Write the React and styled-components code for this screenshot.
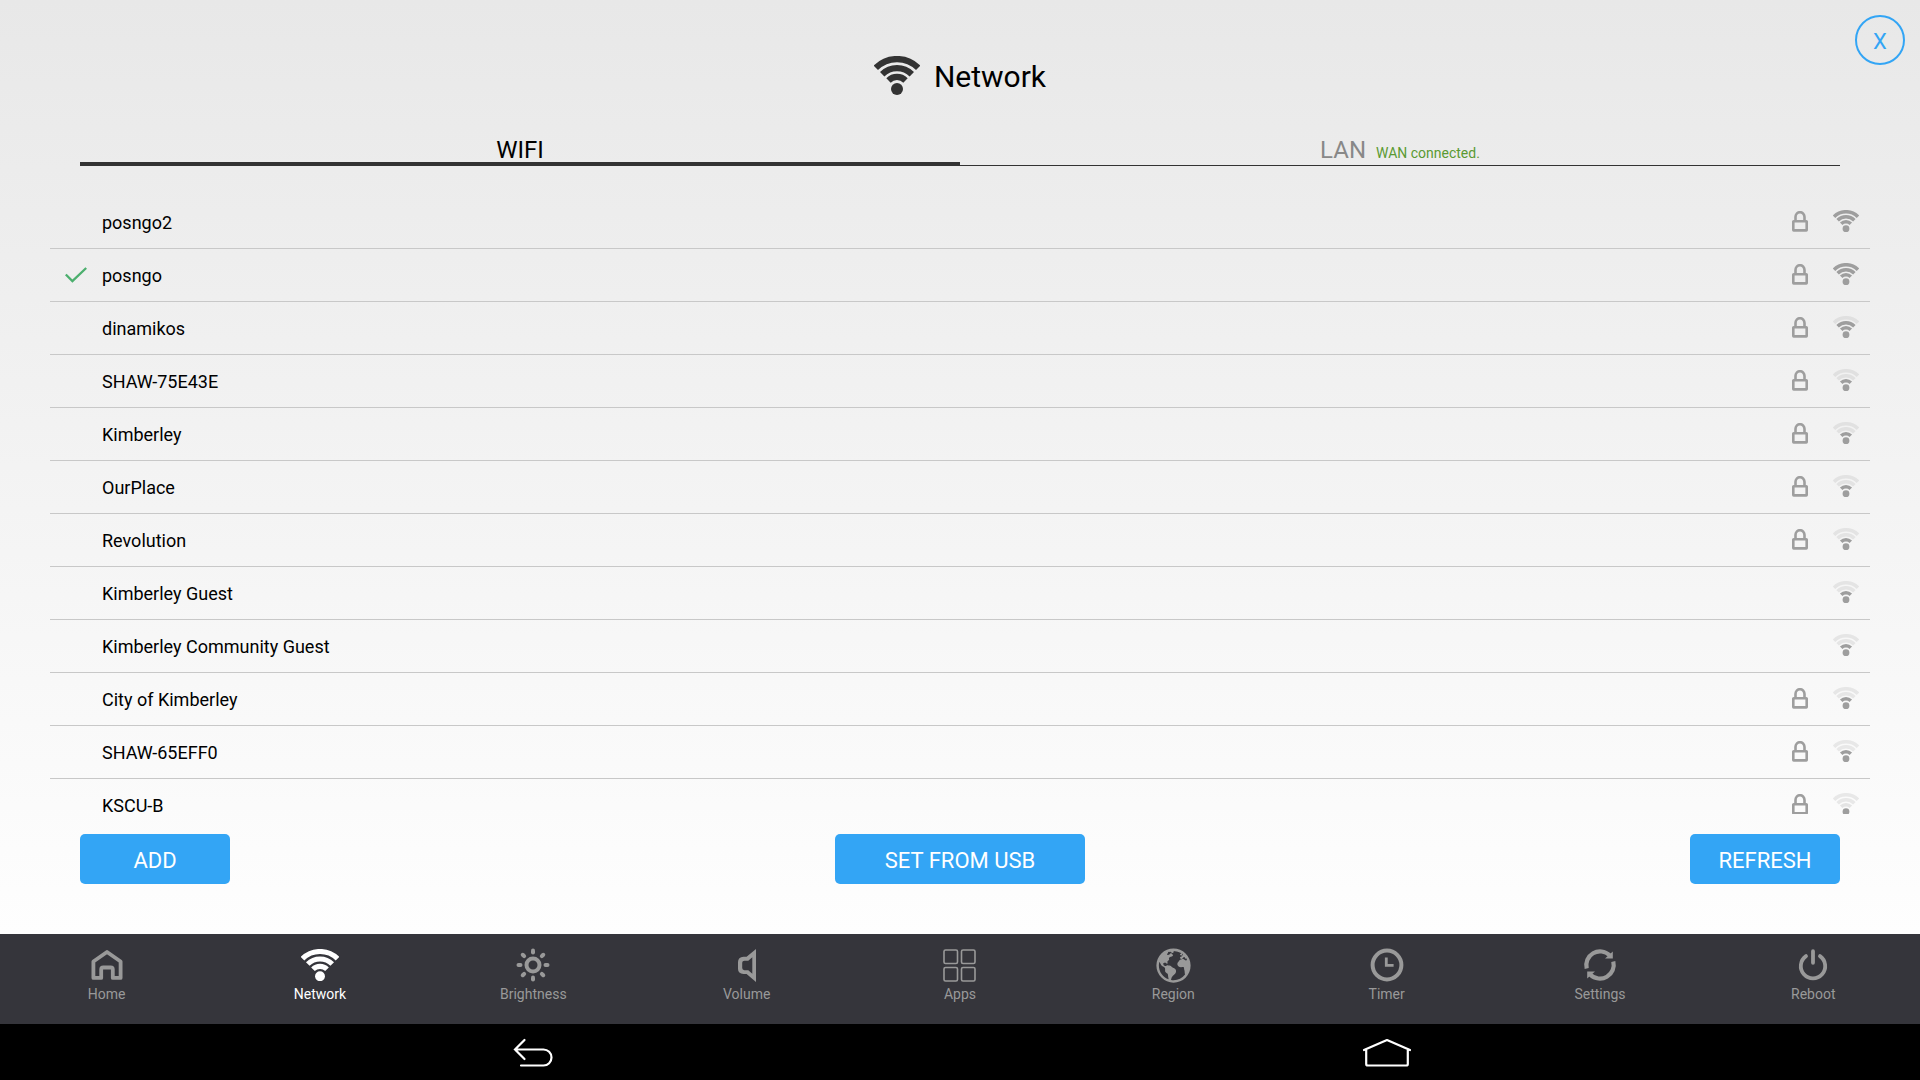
import React, { useState } from "react";
import styled, { createGlobalStyle } from "styled-components";
import { IoEarth } from "react-icons/io5";

const GlobalStyle = createGlobalStyle`
	* {
		box-sizing: border-box;
	}

	body {
		margin: 0;
		font-family: Roboto, "Liberation Sans", sans-serif;
		color: #000;
	}

	button {
		margin: 0;
		padding: 0;
		border: 0;
		background: none;
		font: inherit;
		color: inherit;
		cursor: pointer;
	}
`;

const Screen = styled.div`
	display: flex;
	flex-direction: column;
	height: 100vh;
`;

const Page = styled.main`
	position: relative;
	display: flex;
	flex-direction: column;
	flex: 1;
	min-height: 0;
	background: linear-gradient(#e8e8e8, #fefefe);
`;

const CloseButton = styled.button`
	position: absolute;
	top: 15px;
	right: 15px;
	width: 50px;
	height: 50px;
	padding-top: 2px;
	border: 2px solid #33a5f5;
	border-radius: 50%;
	color: #33a5f5;
	font-size: 22px;
`;

const Header = styled.header`
	display: flex;
	align-items: center;
	justify-content: center;
	gap: 14px;
	padding: 55px 0 39px;
	color: #333;
`;

const Title = styled.h1`
	margin: 0;
	padding-top: 4px;
	color: #000;
	font-size: 30px;
	font-weight: 400;
	line-height: 36px;
`;

const Tabs = styled.div`
	display: flex;
	margin: 0 80px;
`;

const Tab = styled.button`
	display: flex;
	flex: 1;
	align-items: baseline;
	justify-content: center;
	gap: 10px;
	height: 32px;
	box-shadow: inset 0 ${({ $active }) => ($active ? "-4px" : "-1px")} 0 #333;
	color: ${({ $active }) => ($active ? "#000" : "#888")};
	font-size: 24px;
	line-height: 32px;
`;

const TabStatus = styled.span`
	color: #5a9a32;
	font-size: 14px;
	line-height: 16px;
`;

const NetworkList = styled.ul`
	flex: 1;
	min-height: 0;
	margin: 30px 50px 20px;
	padding: 0;
	overflow-y: auto;
	scrollbar-width: none;
	list-style: none;
`;

const NetworkRow = styled.button`
	display: flex;
	align-items: center;
	width: 100%;
	height: 53px;
	padding-right: 11px;
	border-bottom: 1px solid #c8c8c8;
	font-size: 18px;
	text-align: left;
`;

const CheckSlot = styled.span`
	display: flex;
	width: 52px;
	padding-left: 15px;
	color: #4caf6e;
`;

const NetworkName = styled.span`
	flex: 1;
`;

const NetworkIcons = styled.span`
	display: flex;
	align-items: center;
	gap: 25px;
	padding-bottom: 1px;
	color: #9e9e9e;
`;

const Actions = styled.div`
	display: flex;
	justify-content: space-between;
	padding: 0 80px 50px;
`;

const ActionButton = styled.button`
	width: ${({ $wide }) => ($wide ? "250px" : "150px")};
	height: 50px;
	padding-top: 2px;
	border-radius: 5px;
	background: #33a5f5;
	color: #fff;
	font-size: 22px;
`;

const BottomNav = styled.nav`
	display: flex;
	height: 90px;
	background: #35353b;
`;

const NavItem = styled.button`
	display: flex;
	flex: 1;
	flex-direction: column;
	align-items: center;
	padding-top: 14px;
	color: ${({ $active }) => ($active ? "#fff" : "#999")};
	font-size: 14px;
	line-height: 20px;
`;

const NavIcon = styled.span`
	display: flex;
	align-items: center;
	justify-content: center;
	height: 36px;
	padding-bottom: 2px;
`;

const SystemBar = styled.footer`
	display: grid;
	grid-template-columns: 1fr 1fr;
	height: 56px;
	padding: 0 calc(100% / 18);
	background: #000;
	color: #fff;
`;

const SystemButton = styled.button`
	display: flex;
	align-items: center;
	justify-content: center;
	padding-top: 2px;
`;

// level = how many arcs are lit, 0 to 3
const WifiIcon = ({ width = 46, level = 3 }) => (
	<svg width={width} viewBox="0 0 46 39" fill="none" stroke="currentColor" strokeWidth="6.2">
		<path d="M14.5 24.5a12 12 0 0 1 17 0" opacity={level > 0 ? 1 : 0.25} />
		<path d="M8.2 18.2a21 21 0 0 1 29.6 0" opacity={level > 1 ? 1 : 0.2} />
		<path d="M1.8 11.8a30 30 0 0 1 42.4 0" opacity={level > 2 ? 1 : 0.2} />
		<circle cx="23" cy="33" r="6" fill="currentColor" stroke="none" />
	</svg>
);

const LockIcon = () => (
	<svg width="16" height="21" viewBox="0 0 16 21" fill="none" stroke="currentColor" strokeWidth="2.6">
		<path d="M3.5 10V6a4.5 4.8 0 0 1 9 0v4" />
		<rect x="1.3" y="10.2" width="13.4" height="9.2" rx="0.4" />
	</svg>
);

const CheckIcon = () => (
	<svg width="22" height="16" viewBox="0 0 22 16" fill="none" stroke="currentColor" strokeWidth="2.3">
		<path d="M.8 7.5l6.6 6.6L21.2 1" />
	</svg>
);

const HomeIcon = () => (
	<svg width="32" height="32" viewBox="0 0 32 32" fill="none" stroke="currentColor" strokeWidth="3.8" strokeLinejoin="round">
		<path d="M2.4 12.5L16 3l13.6 9.5v16.4h-7.8v-8.4q0-2-2-2h-7.6q-2 0-2 2v8.4H2.4z" />
	</svg>
);

const BrightnessIcon = () => (
	<svg width="34" height="34" viewBox="-17 -17 34 34" fill="none" stroke="currentColor" strokeWidth="4" strokeLinecap="round">
		<circle r="6.5" />
		{[0, 45, 90, 135, 180, 225, 270, 315].map((angle) => (
			<path key={angle} d="M0-12.5v-2" transform={`rotate(${angle})`} />
		))}
	</svg>
);

const VolumeIcon = () => (
	<svg width="18" height="33" viewBox="0 0 18 33" fill="currentColor" fillRule="evenodd">
		<path d="M18 0v33l-9.4-8H5.5Q0 24.5 0 20v-7Q0 8.2 5.5 7.7h3.1zM14.3 8.3l-4 3.4H6.500Q4.200 11.900 4.200 13.800v5.200Q4.200 21 6.500 21.200h3.800l4 3.600z" />
	</svg>
);

const AppsIcon = () => (
	<svg width="33" height="33" viewBox="0 0 33 33" fill="none" stroke="currentColor" strokeWidth="1.6">
		<rect x="1" y="1" width="13.5" height="13.5" rx="1.5" />
		<rect x="18.5" y="1" width="13.5" height="13.5" rx="1.5" />
		<rect x="1" y="18.5" width="13.5" height="13.5" rx="1.5" />
		<rect x="18.5" y="18.5" width="13.5" height="13.5" rx="1.5" />
	</svg>
);

const TimerIcon = () => (
	<svg width="34" height="34" viewBox="-17 -17 34 34" fill="none" stroke="currentColor">
		<circle r="14.4" strokeWidth="4" />
		<path d="M-.7-7.5V.3h7.300" strokeWidth="2.8" />
	</svg>
);

const SettingsIcon = () => (
	<svg width="34" height="34" viewBox="-17 -17 34 34" fill="none" stroke="currentColor" strokeWidth="4.2">
		{[0, 180].map((angle) => (
			<g key={angle} transform={`rotate(${angle})`}>
				<path d="M-13.3 3.6A13.8 13.8 0 0 1 9.6-9.8" />
				<path d="M5-6.5h7.8v-7z" fill="currentColor" stroke="none" />
			</g>
		))}
	</svg>
);

const RebootIcon = () => (
	<svg width="30" height="34" viewBox="-15 -18 30 34" fill="none" stroke="currentColor" strokeWidth="3.8" strokeLinecap="round">
		<path d="M-7-9.9A12.2 12.2 0 1 0 7-9.9M0-14.8v11.6" />
	</svg>
);

const BackIcon = () => (
	<svg width="40" height="30" viewBox="0 0 40 30" fill="none" stroke="currentColor" strokeWidth="2.2" strokeLinecap="round">
		<path d="M11.5 2L2 11.5l9.5 9.500M2 11.5h28.500a8 8 0 0 1 0 16H8" />
	</svg>
);

const SystemHomeIcon = () => (
	<svg width="50" height="30" viewBox="0 0 50 30" fill="none" stroke="currentColor" strokeWidth="2.2" strokeLinecap="round" strokeLinejoin="round">
		<path d="M2 12L25 2l23 10M4.200 11.500v14.500q0 1.500 1.500 1.500h38.600q1.500 0 1.500-1.500V11.500" />
	</svg>
);

const networks = [
	{ name: "posngo2", locked: true, level: 3 },
	{ name: "posngo", locked: true, level: 3, connected: true },
	{ name: "dinamikos", locked: true, level: 2 },
	{ name: "SHAW-75E43E", locked: true, level: 1 },
	{ name: "Kimberley", locked: true, level: 1 },
	{ name: "OurPlace", locked: true, level: 1 },
	{ name: "Revolution", locked: true, level: 1 },
	{ name: "Kimberley Guest", locked: false, level: 1 },
	{ name: "Kimberley Community Guest", locked: false, level: 1 },
	{ name: "City of Kimberley", locked: true, level: 1 },
	{ name: "SHAW-65EFF0", locked: true, level: 1 },
	{ name: "KSCU-B", locked: true, level: 0 },
];

const navItems = [
	{ label: "Home", icon: <HomeIcon /> },
	{ label: "Network", icon: <WifiIcon width={38} /> },
	{ label: "Brightness", icon: <BrightnessIcon /> },
	{ label: "Volume", icon: <VolumeIcon /> },
	{ label: "Apps", icon: <AppsIcon /> },
	{ label: "Region", icon: <IoEarth size={39} /> },
	{ label: "Timer", icon: <TimerIcon /> },
	{ label: "Settings", icon: <SettingsIcon /> },
	{ label: "Reboot", icon: <RebootIcon /> },
];

const App = () => {
	const [tab, setTab] = useState("wifi");
	const [page, setPage] = useState("Network");

	return (
		<>
			<GlobalStyle />
			<Screen>
				<Page>
					<Header>
						<WifiIcon />
						<Title>Network</Title>
					</Header>
					<CloseButton aria-label="Close">X</CloseButton>

					<Tabs role="tablist">
						<Tab role="tab" aria-selected={tab === "wifi"} $active={tab === "wifi"} onClick={() => setTab("wifi")}>
							WIFI
						</Tab>
						<Tab role="tab" aria-selected={tab === "lan"} $active={tab === "lan"} onClick={() => setTab("lan")}>
							LAN <TabStatus>WAN connected.</TabStatus>
						</Tab>
					</Tabs>

					<NetworkList>
						{networks.map((network) => (
							<li key={network.name}>
								<NetworkRow>
									<CheckSlot>{network.connected && <CheckIcon />}</CheckSlot>
									<NetworkName>{network.name}</NetworkName>
									<NetworkIcons>
										{network.locked && <LockIcon />}
										<WifiIcon width={26} level={network.level} />
									</NetworkIcons>
								</NetworkRow>
							</li>
						))}
					</NetworkList>

					<Actions>
						<ActionButton>ADD</ActionButton>
						<ActionButton $wide>SET FROM USB</ActionButton>
						<ActionButton>REFRESH</ActionButton>
					</Actions>
				</Page>

				<BottomNav>
					{navItems.map(({ label, icon }) => (
						<NavItem key={label} $active={page === label} onClick={() => setPage(label)}>
							<NavIcon>{icon}</NavIcon>
							{label}
						</NavItem>
					))}
				</BottomNav>

				<SystemBar>
					<SystemButton aria-label="Back"><BackIcon /></SystemButton>
					<SystemButton aria-label="Home screen"><SystemHomeIcon /></SystemButton>
				</SystemBar>
			</Screen>
		</>
	);
};

export default App;
